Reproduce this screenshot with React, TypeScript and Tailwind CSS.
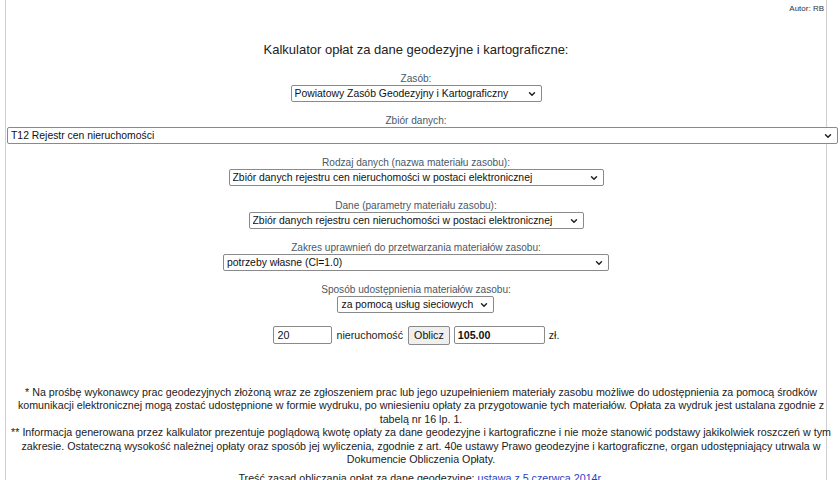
import { ChevronDown } from "lucide-react";

const labelCls = "text-[10.1px] leading-[12px] text-[#4a5866]";

function Select({ value, width }: { value: string; width: string }) {
  return (
    <div className={`relative flex ${width}`}>
      <select
        defaultValue={value}
        className="appearance-none w-full h-[17px] border border-[#8a8a8a] rounded-[2px] bg-white pl-[3px] pr-[16px] text-[10.4px] leading-[15px] text-[#111] text-left"
      >
        <option>{value}</option>
      </select>
      <ChevronDown
        size={10}
        strokeWidth={3.5}
        className="absolute right-[5px] top-[4px] pointer-events-none text-[#222]"
      />
    </div>
  );
}

function Field({ label, value, width }: { label: string; value: string; width: string }) {
  return (
    <div className="flex flex-col items-center">
      <p className={labelCls}>{label}</p>
      <Select value={value} width={width} />
    </div>
  );
}

export default function App() {
  return (
    <div className="w-[840px] h-[480px] overflow-hidden bg-white font-['Liberation_Sans',Arial,sans-serif] text-[#222]">
      <div className="ml-[5px] w-[822px] h-[480px] border-x border-[#cfcfcf] px-px">
        <p className="text-right text-[8px] leading-[10px] pt-[4px] pr-px text-[#333]">Autor: RB</p>

        <h1 className="text-center text-[13px] leading-[16px] mt-[28px] text-[#222]">
          Kalkulator opłat za dane geodezyjne i kartograficzne:
        </h1>

        <div className="mt-[15px] flex flex-col items-center gap-[13.2px]">
          <Field label="Zasób:" value="Powiatowy Zasób Geodezyjny i Kartograficzny" width="w-[251px]" />

          <div className="flex flex-col items-center self-stretch">
            <p className={labelCls}>Zbiór danych:</p>
            <div className="self-start flex">
              <Select value="T12 Rejestr cen nieruchomości" width="w-[831px]" />
            </div>
          </div>

          <Field
            label="Rodzaj danych (nazwa materiału zasobu):"
            value="Zbiór danych rejestru cen nieruchomości w postaci elektronicznej"
            width="w-[375px]"
          />
          <Field
            label="Dane (parametry materiału zasobu):"
            value="Zbiór danych rejestru cen nieruchomości w postaci elektronicznej"
            width="w-[335px]"
          />
          <Field
            label="Zakres uprawnień do przetwarzania materiałów zasobu:"
            value="potrzeby własne (Cl=1.0)"
            width="w-[386px]"
          />
          <Field
            label="Sposób udostępnienia materiałów zasobu:"
            value="za pomocą usług sieciowych"
            width="w-[157px]"
          />
        </div>

        <div className="mt-[13px] flex items-center justify-center gap-[4px] text-[10.7px]">
          <input
            defaultValue="20"
            className="w-[59px] h-[18px] border border-[#8a8a8a] rounded-[2px] px-[4px] text-[10.7px] text-[#111]"
          />
          <span className="px-px">nieruchomość</span>
          <button className="h-[19px] px-[5px] border border-[#8a8a8a] rounded-[2px] bg-[#efefef] text-[10.7px] text-[#111]">
            Oblicz
          </button>
          <input
            defaultValue="105.00"
            className="w-[91px] h-[18px] border border-[#8a8a8a] rounded-[2px] px-[3px] text-[10.7px] font-bold text-[#111]"
          />
          <span>zł.</span>
        </div>

        <div className="-ml-[6px] w-[840px] mt-[41px] text-center text-[10.7px] leading-[13.5px] text-[#222] whitespace-nowrap">
          <p>
            * Na prośbę wykonawcy prac geodezyjnych złożoną wraz ze zgłoszeniem prac lub jego uzupełnieniem materiały zasobu możliwe do udostępnienia za pomocą środków
            <br />
            komunikacji elektronicznej mogą zostać udostępnione w formie wydruku, po wniesieniu opłaty za przygotowanie tych materiałów. Opłata za wydruk jest ustalana zgodnie z
            <br />
            tabelą nr 16 lp. 1.
          </p>
          <p>
            ** Informacja generowana przez kalkulator prezentuje poglądową kwotę opłaty za dane geodezyjne i kartograficzne i nie może stanowić podstawy jakikolwiek roszczeń w tym
            <br />
            zakresie. Ostateczną wysokość należnej opłaty oraz sposób jej wyliczenia, zgodnie z art. 40e ustawy Prawo geodezyjne i kartograficzne, organ udostępniający utrwala w
            <br />
            Dokumencie Obliczenia Opłaty.
          </p>
          <p className="mt-[5.5px]">
            Treść zasad obliczania opłat za dane geodezyjne:{" "}
            <a href="#" className="text-[#2a3fbf]">ustawa z 5 czerwca 2014r.</a>
          </p>
        </div>
      </div>
    </div>
  );
}
